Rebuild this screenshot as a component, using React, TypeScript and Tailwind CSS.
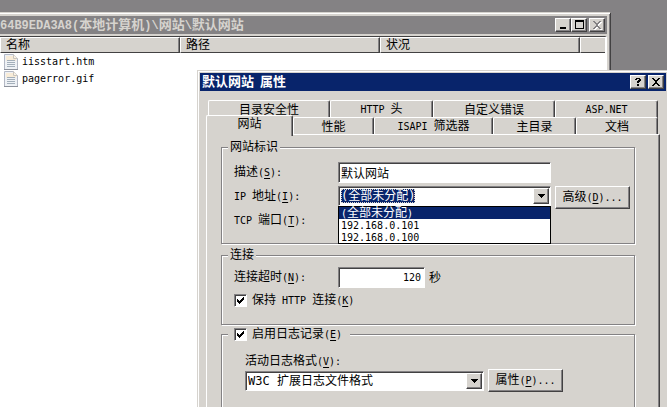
import React from 'react';
import clsx from 'clsx';

const raised =
  'bg-[#d6d3ce] border border-t-white border-l-white border-r-[#424142] border-b-[#424142] shadow-[inset_-1px_-1px_0_#848284]';
const sunken =
  'bg-white border border-t-[#848284] border-l-[#848284] border-r-white border-b-white shadow-[inset_1px_1px_0_#424142]';

// Latin runs are half the width of a Chinese character; "&X" marks the access key.
function Txt({ children, latin = 'text-[10px]' }: { children: string; latin?: string }) {
  const runs = children.match(/&.|[\x20-\x25\x27-\x7e]+|[^\x20-\x7e]+/g) ?? [];
  return (
    <span className="whitespace-pre">
      {runs.map((run, i) => {
        if (run[0] === '&') {
          return (
            <u key={i} className={clsx(latin, 'underline-offset-2')}>
              {run[1]}
            </u>
          );
        }
        return /^[\x20-\x7e]/.test(run) ? (
          <span key={i} className={latin}>
            {run}
          </span>
        ) : (
          run
        );
      })}
    </span>
  );
}

function CaptionButton({ label, children }: { label: string; children: React.ReactNode }) {
  return (
    <button aria-label={label} className={clsx(raised, 'flex h-[14px] w-4 items-center justify-center')}>
      <svg width="12" height="10" viewBox="0 0 12 10" shapeRendering="crispEdges">
        {children}
      </svg>
    </button>
  );
}

const crossPath =
  'M2 1h2v1h1v1h2v-1h1v-1h2v1h-1v1h-1v1h-1v2h1v1h1v1h1v1h-2v-1h-1v-1h-2v1h-1v1h-2v-1h1v-1h1v-1h1v-2h-1v-1h-1v-1h-1z';

function FileIcon() {
  return (
    <svg width="14" height="16" viewBox="0 0 14 16" className="shrink-0">
      <path d="M.5.5h9l4 4v11H.5z" fill="#eef1f5" stroke="#b3b8c4" />
      <path d="M2 2h7v3h3v2H2z" fill="#f8ecd8" />
      <path d="M9.5.5v4h4" fill="#fbf3e4" stroke="#c9c4bd" />
      <path d="M3 6.500h8M3 8.500h8M3 10.500h8M3 12.500h8" stroke="#a3afba" />
      <path d="M0 15.500h14" stroke="#8d929c" />
    </svg>
  );
}

function SiteWindow() {
  const files = ['iisstart.htm', 'pagerror.gif'];
  const columns = ['名称', '路径', '状况', ''];
  return (
    <section className="absolute top-3 right-14 bottom-0 left-0 flex flex-col border-t border-r border-t-[#d6d3ce] border-r-[#424142] bg-[#d6d3ce] pt-[3px] pr-[3px] shadow-[inset_0_1px_0_#fff,inset_-1px_0_0_#848284]">
      <header className="flex h-[18px] items-center justify-between bg-[#848284] pr-[2px] text-[13px] font-bold text-[#d6d3ce]">
        <h1 className="leading-4">
          <Txt latin="font-['Liberation_Mono',monospace] text-[12px]">64B9EDA3A8(本地计算机)\网站\默认网站</Txt>
        </h1>
        <div className="flex">
          <CaptionButton label="最小化">
            <path d="M3 7h6v2H3z" />
          </CaptionButton>
          <CaptionButton label="最大化">
            <path d="M2 0h9v9H2zM3 2v6h7V2z" fillRule="evenodd" />
          </CaptionButton>
          <span className="w-[2px]" />
          <CaptionButton label="关闭">
            <path d={crossPath} fill="#fff" transform="translate(1 1)" />
            <path d={crossPath} fill="#848284" />
          </CaptionButton>
        </div>
      </header>
      <div className="mt-[2px] grow border-t border-r-2 border-t-[#424142] border-r-white bg-white">
        <table className="w-full table-fixed border-separate border-spacing-0 text-left">
          <colgroup>
            <col className="w-[180px]" />
            <col className="w-[200px]" />
            <col className="w-[200px]" />
            <col />
          </colgroup>
          <thead>
            <tr className="bg-[#d6d3ce]">
              {columns.map((name, i) => (
                <th
                  key={i}
                  className={clsx(
                    'h-4 border-t border-b border-l border-t-white border-b-[#424142] border-l-white p-0 pl-[5px] leading-[14px] font-normal',
                    i < 3 && 'border-r border-r-[#424142] shadow-[inset_-1px_0_0_#848284]'
                  )}
                >
                  {name}
                </th>
              ))}
            </tr>
          </thead>
          <tbody>
            {files.map((file) => (
              <tr key={file}>
                <td className="p-0">
                  <span className="flex h-[17px] items-center gap-1 pl-1 leading-4">
                    <FileIcon />
                    <Txt>{file}</Txt>
                  </span>
                </td>
              </tr>
            ))}
          </tbody>
        </table>
      </div>
    </section>
  );
}

function Tab({ label, selected }: { label: string; selected?: boolean }) {
  return (
    <button
      role="tab"
      aria-selected={!!selected}
      className={clsx(
        'rounded-t-[2px] border-t border-r border-l border-t-white border-r-[#424142] border-l-white bg-[#d6d3ce] leading-4 shadow-[inset_-1px_0_0_#848284]',
        selected && 'relative z-10 -mt-[2px] -mb-px -ml-[2px] pb-1'
      )}
    >
      <Txt>{label}</Txt>
    </button>
  );
}

function Group({ legend, className, children }: { legend: React.ReactNode; className?: string; children: React.ReactNode }) {
  return (
    <fieldset
      className={clsx(
        'border border-[#848284] pr-1 pl-3 shadow-[1px_1px_0_#fff,inset_1px_1px_0_#fff]',
        className
      )}
    >
      <legend className="-ml-[6px] bg-[#d6d3ce] px-[2px] leading-[14px]">{legend}</legend>
      {children}
    </fieldset>
  );
}

function Check({ id, label }: { id: string; label: string }) {
  return (
    <span className="flex items-center gap-[5px]">
      <span className="relative flex">
        <input id={id} type="checkbox" defaultChecked className={clsx(sunken, 'size-[13px] appearance-none')} />
        <svg viewBox="0 0 13 13" className="pointer-events-none absolute inset-0 size-[13px]" shapeRendering="crispEdges">
          <path d="M3 5h1v1h1v1h1v-1h1v-1h1v-1h1v-1h1v3h-1v1h-1v1h-1v1h-1v1h-1v-1h-1v-1h-1z" />
        </svg>
      </span>
      <label htmlFor={id}>
        <Txt>{label}</Txt>
      </label>
    </span>
  );
}

function Arrow() {
  return (
    <span className={clsx(raised, 'pointer-events-none flex w-4 shrink-0 items-center justify-center self-stretch')}>
      <svg width="7" height="4" viewBox="0 0 7 4" shapeRendering="crispEdges">
        <path d="M0 0h7v1h-1v1h-1v1h-1v1h-1v-1h-1v-1h-1v-1h-1z" />
      </svg>
    </span>
  );
}

function PushButton({ label }: { label: string }) {
  return (
    <button className={clsx(raised, 'h-[23px] w-[75px] shrink-0 leading-4')}>
      <Txt>{label}</Txt>
    </button>
  );
}

function PropertiesDialog() {
  const addresses = ['(全部未分配)', '192.168.0.101', '192.168.0.100'];
  return (
    <section
      role="dialog"
      aria-labelledby="dialog-title"
      className="absolute top-[70px] right-0 -bottom-4 left-[197px] flex flex-col border-t border-l border-[#d6d3ce] bg-[#d6d3ce] pt-[2px] pl-[2px] shadow-[inset_1px_1px_0_#fff]"
    >
      <header className="mr-px flex h-[18px] shrink-0 items-center justify-between bg-[#08246b] pr-[2px] pl-[2px] text-[13px] font-bold text-white">
        <h2 id="dialog-title" className="leading-4">
          <Txt>默认网站 属性</Txt>
        </h2>
        <div className="flex gap-[2px]">
          <CaptionButton label="帮助">
            <path d="M4 1h4v1h1v2h-1v1h-1v1h-2v-2h1v-1h1v-1h-2v1h-2v-1h1zM5 7h2v2h-2z" />
          </CaptionButton>
          <CaptionButton label="关闭">
            <path d={crossPath} />
          </CaptionButton>
        </div>
      </header>

      <div className="mt-[9px] mr-[9px] ml-2 shrink-0" role="tablist">
        <div className="grid h-[17px] grid-cols-[122fr_103fr_122fr_103fr]">
          <Tab label="目录安全性" />
          <Tab label="HTTP 头" />
          <Tab label="自定义错误" />
          <Tab label="ASP.NET" />
        </div>
        <div className="grid h-[17px] grid-cols-[85fr_81fr_119fr_83fr_82fr]">
          <Tab label="网站" selected />
          <Tab label="性能" />
          <Tab label="ISAPI 筛选器" />
          <Tab label="主目录" />
          <Tab label="文档" />
        </div>
      </div>

      <div
        role="tabpanel"
        className="mr-[7px] ml-[6px] flex grow flex-col border-t border-r border-l border-t-white border-r-[#424142] border-l-white pt-[5px] pr-6 pl-[14px] shadow-[inset_-1px_0_0_#848284]"
      >
        <Group legend="网站标识" className="pb-[15px]">
          <div className="grid grid-cols-[104px_213px_75px] gap-y-[3px] pt-2 leading-4">
            <label htmlFor="desc" className="self-center">
              <Txt>描述(&S):</Txt>
            </label>
            <input id="desc" defaultValue="默认网站" className={clsx(sunken, 'h-[21px] px-[2px]')} />
            <span />
            <label htmlFor="ip" className="pt-[2px]">
              <Txt>IP 地址(&I):</Txt>
            </label>
            <div className="relative">
              <div className={clsx(sunken, 'flex h-5 items-center justify-between p-px')}>
                <select
                  id="ip"
                  className="ml-px h-[14px] w-[74px] appearance-none bg-[#08246b] leading-[14px] text-white outline-1 -outline-offset-1 outline-dotted outline-[#d6d3ce]"
                >
                  {addresses.map((address) => (
                    <option key={address}>{address}</option>
                  ))}
                </select>
                <Arrow />
              </div>
              <ul className="absolute top-5 right-0 left-0 z-10 border border-black bg-white">
                {addresses.map((address, i) => (
                  <li key={address} className={clsx('h-3 pl-[2px] leading-3', i === 0 && 'bg-[#08246b] text-white')}>
                    <Txt>{address}</Txt>
                  </li>
                ))}
              </ul>
            </div>
            <div className="pl-1">
              <PushButton label="高级(&D)..." />
            </div>
            <span className="h-4">
              <Txt>TCP 端口(&T):</Txt>
            </span>
          </div>
        </Group>

        <Group legend="连接" className="mt-1 pb-[15px]">
          <div className="flex items-center pt-[5px] leading-4">
            <label htmlFor="timeout" className="w-[104px]">
              <Txt>连接超时(&N):</Txt>
            </label>
            <input
              id="timeout"
              defaultValue="120"
              className={clsx(sunken, 'mr-1 h-[21px] w-[87px] px-[3px] text-right text-[10px]')}
            />
            秒
          </div>
          <div className="mt-1 leading-4">
            <Check id="keepalive" label="保持 HTTP 连接(&K)" />
          </div>
        </Group>

        <Group
          legend={
            <span className="ml-1 block pr-[6px]">
              <Check id="logging" label="启用日志记录(&E)" />
            </span>
          }
          className="mt-[2px] grow"
        >
          <div className="pt-3 pl-[11px]">
            <label htmlFor="format" className="block h-[15px] leading-[14px]">
              <Txt>活动日志格式(&V):</Txt>
            </label>
            <div className="flex items-center gap-1">
              <div className={clsx(sunken, 'relative flex h-5 w-[239px] items-center p-px')}>
                <select id="format" className="h-4 grow appearance-none pl-px leading-4">
                  <option>W3C 扩展日志文件格式</option>
                </select>
                <Arrow />
              </div>
              <PushButton label="属性(&P)..." />
            </div>
          </div>
        </Group>
      </div>
    </section>
  );
}

export default function App() {
  return (
    <main className="relative min-h-screen overflow-hidden bg-[#848284] font-['DejaVu_Sans_Mono','Noto_Sans_CJK_SC',monospace] text-[12px] text-black">
      <SiteWindow />
      <PropertiesDialog />
    </main>
  );
}
